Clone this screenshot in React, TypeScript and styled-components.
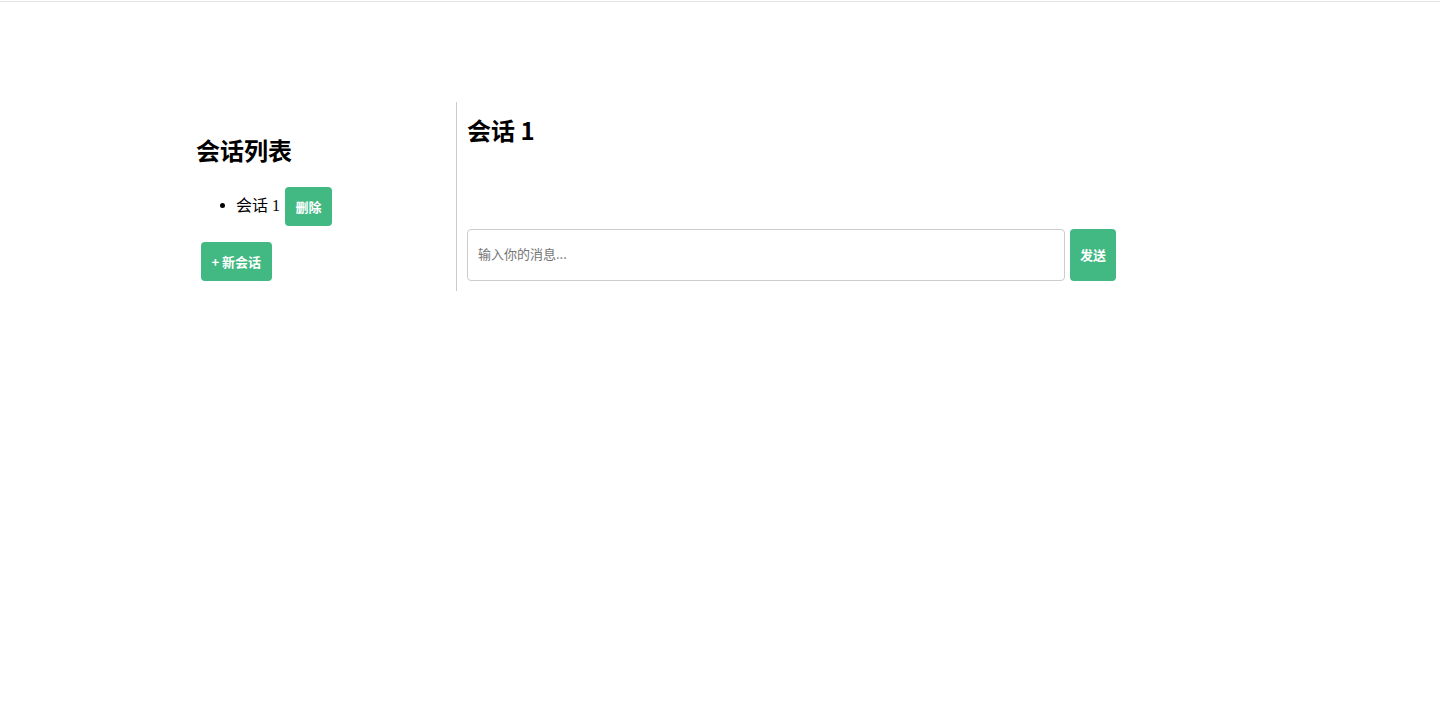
import React, { useState } from 'react';
import styled, { createGlobalStyle } from 'styled-components';

const GlobalStyle = createGlobalStyle`
  body {
    margin: 0;
    background: #fff;
    font-family: "Liberation Serif", "Noto Sans CJK SC", serif;
    color: #000;
  }
`;

const TopRule = styled.div`
  margin-top: 1px;
  height: 1px;
  background: #e2e2e2;
`;

const Layout = styled.div`
  display: flex;
  width: 940px;
  margin: 100px 0 0 186px;
`;

const Sidebar = styled.aside`
  width: 250px;
  padding: 10px;
  border-right: 1px solid #ccc;
`;

const Main = styled.main`
  flex: 1;
  padding: 10px;
  display: flex;
  flex-direction: column;
`;

const Heading = styled.h2<{ $flush?: boolean }>`
  font-family: "Noto Sans CJK SC", "DejaVu Sans", sans-serif;
  font-size: 24px;
  font-weight: 700;
  line-height: 36px;
  margin: ${({ $flush }) => ($flush ? '0 0 20px' : '20px 0 17px')};
`;

const List = styled.ul`
  margin: 0 0 16px;
  padding-left: 40px;
`;

const Item = styled.li`
  font-size: 16px;
  line-height: 39px;
`;

const Label = styled.span`
  position: relative;
  top: 1px;
`;

const GreenButton = styled.button`
  background: #42b883;
  color: #fff;
  border: none;
  border-radius: 4px;
  font-family: "Noto Sans CJK SC", "DejaVu Sans", sans-serif;
  font-size: 13px;
  font-weight: 700;
  padding: 0 10.5px;
  height: 39px;
  cursor: pointer;
`;

const DeleteButton = styled(GreenButton)`
  margin-left: 5px;
  vertical-align: middle;
  font-weight: 600;
`;

const NewButton = styled(GreenButton)`
  margin-left: 5px;
`;

const Messages = styled.div`
  height: 61px;
`;

const InputRow = styled.div`
  display: flex;
  gap: 5px;
`;

const MessageInput = styled.input`
  flex: 1;
  height: 52px;
  box-sizing: border-box;
  border: 1px solid #ccc;
  border-radius: 4px;
  padding: 0 10px 3px;
  font-family: "Noto Sans CJK SC", "DejaVu Sans", sans-serif;
  font-size: 13px;
  outline: none;
  &::placeholder {
    color: #757575;
  }
`;

const SendButton = styled(GreenButton)`
  height: 52px;
  padding: 0 10px 2px;
`;

export default function App() {
  const [sessions] = useState(['会话 1']);
  const [text, setText] = useState('');

  return (
    <>
      <GlobalStyle />
      <TopRule />
      <Layout>
        <Sidebar>
          <Heading>会话列表</Heading>
          <List>
            {sessions.map((s) => (
              <Item key={s}>
                <Label>{s}</Label>
                <DeleteButton>删除</DeleteButton>
              </Item>
            ))}
          </List>
          <NewButton>+ 新会话</NewButton>
        </Sidebar>
        <Main>
          <Heading $flush>会话 1</Heading>
          <Messages />
          <InputRow>
            <MessageInput
              placeholder="输入你的消息..."
              value={text}
              onChange={(e) => setText(e.target.value)}
            />
            <SendButton>发送</SendButton>
          </InputRow>
        </Main>
      </Layout>
    </>
  );
}
